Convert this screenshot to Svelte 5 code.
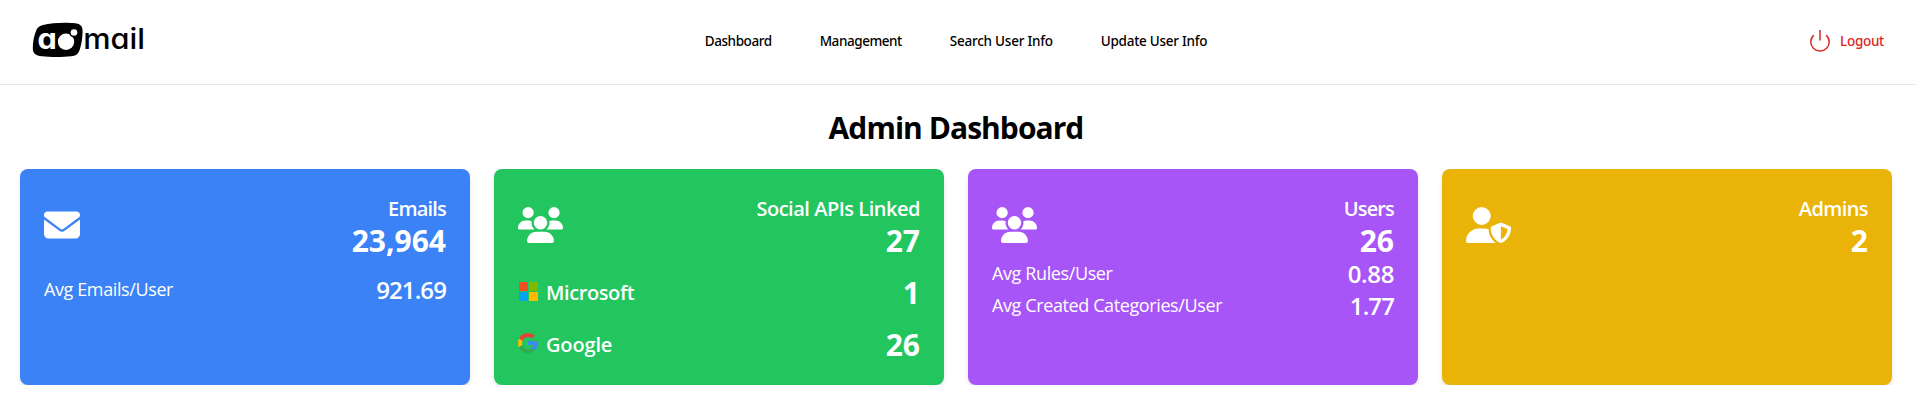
<script>
  const nav = [
    { label: 'Dashboard', ls: -0.43 },
    { label: 'Management', ls: -0.44 },
    { label: 'Search User Info', ls: -0.24 },
    { label: 'Update User Info', ls: -0.26 }
  ];

  const icons = {
    envelope: {
      box: '0 0 512 512',
      width: 36,
      path: 'M48 64C21.5 64 0 85.5 0 112c0 15.1 7.1 29.3 19.2 38.4L236.8 313.6c11.4 8.5 27 8.5 38.4 0L492.8 150.4c12.1-9.1 19.2-23.3 19.2-38.4c0-26.5-21.5-48-48-48H48zM0 176V384c0 35.3 28.7 64 64 64H448c35.3 0 64-28.7 64-64V176L294.4 339.2c-22.8 17.1-54 17.1-76.8 0L0 176z'
    },
    users: {
      box: '0 0 640 512',
      width: 45,
      path: 'M144 0a80 80 0 1 1 0 160A80 80 0 1 1 144 0zM512 0a80 80 0 1 1 0 160A80 80 0 1 1 512 0zM0 298.7C0 239.8 47.8 192 106.7 192h42.7c15.9 0 31 3.5 44.6 9.7c-1.3 7.2-1.9 14.7-1.9 22.3c0 38.2 16.8 72.5 43.3 96c-.2 0-.4 0-.7 0H21.3C9.6 320 0 310.4 0 298.7zM405.3 320c-.2 0-.4 0-.7 0c26.6-23.5 43.3-57.8 43.3-96c0-7.6-.7-15-1.9-22.3c13.6-6.3 28.7-9.7 44.6-9.7h42.7C592.2 192 640 239.8 640 298.7c0 11.8-9.6 21.3-21.3 21.3H405.3zM224 224a96 96 0 1 1 192 0 96 96 0 1 1 -192 0zM128 485.3C128 411.7 187.7 352 261.3 352H378.7C452.3 352 512 411.7 512 485.3c0 14.7-11.9 26.7-26.7 26.7H154.7c-14.7 0-26.7-11.9-26.7-26.7z'
    },
    shield: {
      box: '0 0 640 512',
      width: 45,
      path: 'M224 256A128 128 0 1 0 224 0a128 128 0 1 0 0 256zm-45.7 48C79.8 304 0 383.8 0 482.3C0 498.7 13.3 512 29.7 512H418.3c1.8 0 3.5-.2 5.3-.5c-76.3-55.1-99.8-141-103.1-200.2c-16.1-4.8-33.1-7.3-50.7-7.3H178.3zm308.8-78.3l-120 48C358 277.4 352 286.2 352 296c0 63.3 25.9 168.8 134.8 214.2c5.9 2.5 12.6 2.5 18.5 0C614.1 464.8 640 359.3 640 296c0-9.8-6-18.6-15.1-22.3l-120-48c-5.7-2.3-12.1-2.3-17.8 0zM591.4 312c-3.9 50.7-27.2 116.7-95.4 149.7V273.8L591.4 312z'
    }
  };

  const cards = [
    {
      tone: 'blue', icon: icons.envelope, title: 'Emails', ls: -0.8, value: '23,964', spaced: true,
      stats: [{ label: 'Avg Emails/User', value: '921.69', ls: -0.9 }]
    },
    {
      tone: 'green', icon: icons.users, title: 'Social APIs Linked', ls: -0.48, value: '27',
      providers: [{ name: 'Microsoft', ls: -0.4, value: '1' }, { name: 'Google', ls: -0.15, value: '26' }]
    },
    {
      tone: 'purple', icon: icons.users, title: 'Users', ls: -0.85, value: '26',
      stats: [
        { label: 'Avg Rules/User', value: '0.88', ls: -0.35 },
        { label: 'Avg Created Categories/User', value: '1.77', ls: -0.9 }
      ]
    },
    { tone: 'yellow', icon: icons.shield, title: 'Admins', ls: -0.6, value: '2' }
  ];
</script>

<header>
  <div class="side">
    <svg class="logo" width="114" height="36" viewBox="0 0 114 36">
      <path d="M11 3C20 .6 34 .2 43 1.2c5.500.6 7.800 3 7.600 8.800-.2 7-1.200 13-3 18-1.500 4.500-4 5.900-8.600 6.300-8 .9-21 .9-29 0C3.500 33.600.7 31.500.8 26c.1-5.500 1-11.500 3-16.500C5.200 5.800 7 4.100 11 3z" />
      <text class="mark" x="5.400" y="27.300" textLength="19.300" lengthAdjust="spacingAndGlyphs">a</text>
      <circle cx="34" cy="19.700" r="8.200" fill="#fff" />
      <circle cx="42" cy="10.500" r="4.800" />
      <circle cx="42" cy="10.500" r="3.300" fill="#fff" />
      <text x="51.200" y="27.300" textLength="61.800" lengthAdjust="spacingAndGlyphs">mail</text>
    </svg>
  </div>
  <nav>
    {#each nav as item}
      <a href="#top" style="letter-spacing: {item.ls}px">{item.label}</a>
    {/each}
  </nav>
  <div class="side end">
    <button>
      <svg width="24" height="24" viewBox="0 0 24 24" fill="none" stroke="currentColor" stroke-width="1.500">
        <path d="M5.800 6.100a9.200 9.200 0 1 0 12.400 0M12 1v10.500" />
      </svg>
      <span>Logout</span>
    </button>
  </div>
</header>

<main>
  <h1>Admin Dashboard</h1>
  <div class="grid">
    {#each cards as card}
      <section class="card {card.tone}">
        <div class="row">
          <svg width={card.icon.width} height="36" viewBox={card.icon.box} fill="#fff"><path d={card.icon.path} /></svg>
          <div class="total">
            <h2 style="letter-spacing: {card.ls}px">{card.title}</h2>
            <strong>{card.value}</strong>
          </div>
        </div>
        {#if card.stats}
          <div class:spaced={card.spaced}>
            {#each card.stats as stat}
              <div class="row">
                <span class="label">{stat.label}</span>
                <span class="stat" style="letter-spacing: {stat.ls}px">{stat.value}</span>
              </div>
            {/each}
          </div>
        {/if}
        {#if card.providers}
          {#each card.providers as p}
            <div class="row spaced">
              <div class="provider">
                {#if p.name === 'Microsoft'}
                  <svg width="20" height="20" viewBox="0 0 20 20">
                    <path fill="#f25022" d="M1 1h9v9H1z" /><path fill="#7fba00" d="M11 1h9v9h-9z" />
                    <path fill="#00a4ef" d="M1 11h9v9H1z" /><path fill="#ffb900" d="M11 11h9v9h-9z" />
                  </svg>
                {:else}
                  <svg width="20" height="20" viewBox="0 0 48 48">
                    <path fill="#ea4335" d="M24 9.500c3.540 0 6.710 1.220 9.210 3.600l6.850-6.850C35.900 2.380 30.470 0 24 0 14.620 0 6.510 5.380 2.560 13.220l7.980 6.190C12.430 13.720 17.740 9.500 24 9.500z" />
                    <path fill="#4285f4" d="M46.980 24.550c0-1.570-.15-3.090-.38-4.550H24v9.020h12.940c-.58 2.960-2.260 5.480-4.780 7.180l7.730 6c4.510-4.180 7.090-10.360 7.090-17.650z" />
                    <path fill="#fbbc05" d="M10.530 28.590c-.48-1.450-.76-2.990-.76-4.590s.27-3.140.76-4.590l-7.980-6.190C.92 16.460 0 20.120 0 24c0 3.880.92 7.540 2.560 10.780l7.970-6.190z" />
                    <path fill="#34a853" d="M24 48c6.480 0 11.930-2.130 15.890-5.810l-7.730-6c-2.150 1.450-4.920 2.300-8.160 2.300-6.260 0-11.570-4.220-13.470-9.910l-7.980 6.190C6.510 42.620 14.620 48 24 48z" />
                  </svg>
                {/if}
                <h3 style="letter-spacing: {p.ls}px">{p.name}</h3>
              </div>
              <strong>{p.value}</strong>
            </div>
          {/each}
        {/if}
      </section>
    {/each}
  </div>
</main>

<style>
  :global(body) {
    background: #fff;
    font-family: 'Open Sans', 'Noto Sans', sans-serif;
    color: #000;
  }
  h1, h2, h3 { margin: 0; }
  svg { display: block; flex: none; }
  header {
    display: flex;
    align-items: center;
    box-sizing: border-box;
    height: 85px;
    padding: 0 23px 3px 20px;
    border-bottom: 1px solid #e5e7eb;
  }
  .side { flex: 1 1 0; display: flex; }
  .end { justify-content: flex-end; }
  .logo { margin: -1px 0 0 12px; }
  .logo text { font: 500 28px Inter, sans-serif; font-feature-settings: 'cv11'; }
  .logo .mark { font-weight: 700; fill: #fff; }
  nav { display: flex; gap: 48px; }
  nav a {
    color: #000;
    text-decoration: none;
    font: 500 13.500px/24px 'Noto Sans', sans-serif;
  }
  button {
    display: flex;
    align-items: center;
    gap: 8px;
    margin: 0 8px 0 0;
    padding: 0;
    border: 0;
    background: none;
    color: #dc2626;
    font: 500 13.500px/24px 'Noto Sans', sans-serif;
    letter-spacing: -0.280px;
  }
  main { padding: 24px 23px 0 20px; }
  h1 {
    padding-top: 2px;
    margin-bottom: 24px;
    font-size: 30px;
    line-height: 34px;
    font-weight: 700;
    letter-spacing: -0.950px;
    text-align: center;
  }
  .grid { display: grid; grid-template-columns: repeat(4, 1fr); gap: 24px; }
  .card {
    box-sizing: border-box;
    min-height: 216px;
    padding: 24px;
    border-radius: 8px;
    color: #fff;
    box-shadow: 0 4px 6px -1px rgb(0 0 0 / 0.1), 0 2px 4px -2px rgb(0 0 0 / 0.1);
  }
  .blue { background: #3b82f6; }
  .green { background: #22c55e; }
  .purple { background: #a855f7; }
  .yellow { background: #eab308; }
  .row { display: flex; justify-content: space-between; align-items: center; }
  .spaced { margin-top: 16px; }
  .total { text-align: right; }
  h2, h3 { padding-top: 4px; font-size: 20px; line-height: 24px; font-weight: 600; }
  strong { display: block; padding-top: 4px; font-size: 30px; line-height: 32px; font-weight: 700; }
  .label { font-size: 18px; line-height: 28px; letter-spacing: -0.390px; }
  .stat { padding-top: 2px; font-size: 24px; line-height: 30px; font-weight: 600; }
  .provider { display: flex; align-items: center; gap: 8px; }
</style>
